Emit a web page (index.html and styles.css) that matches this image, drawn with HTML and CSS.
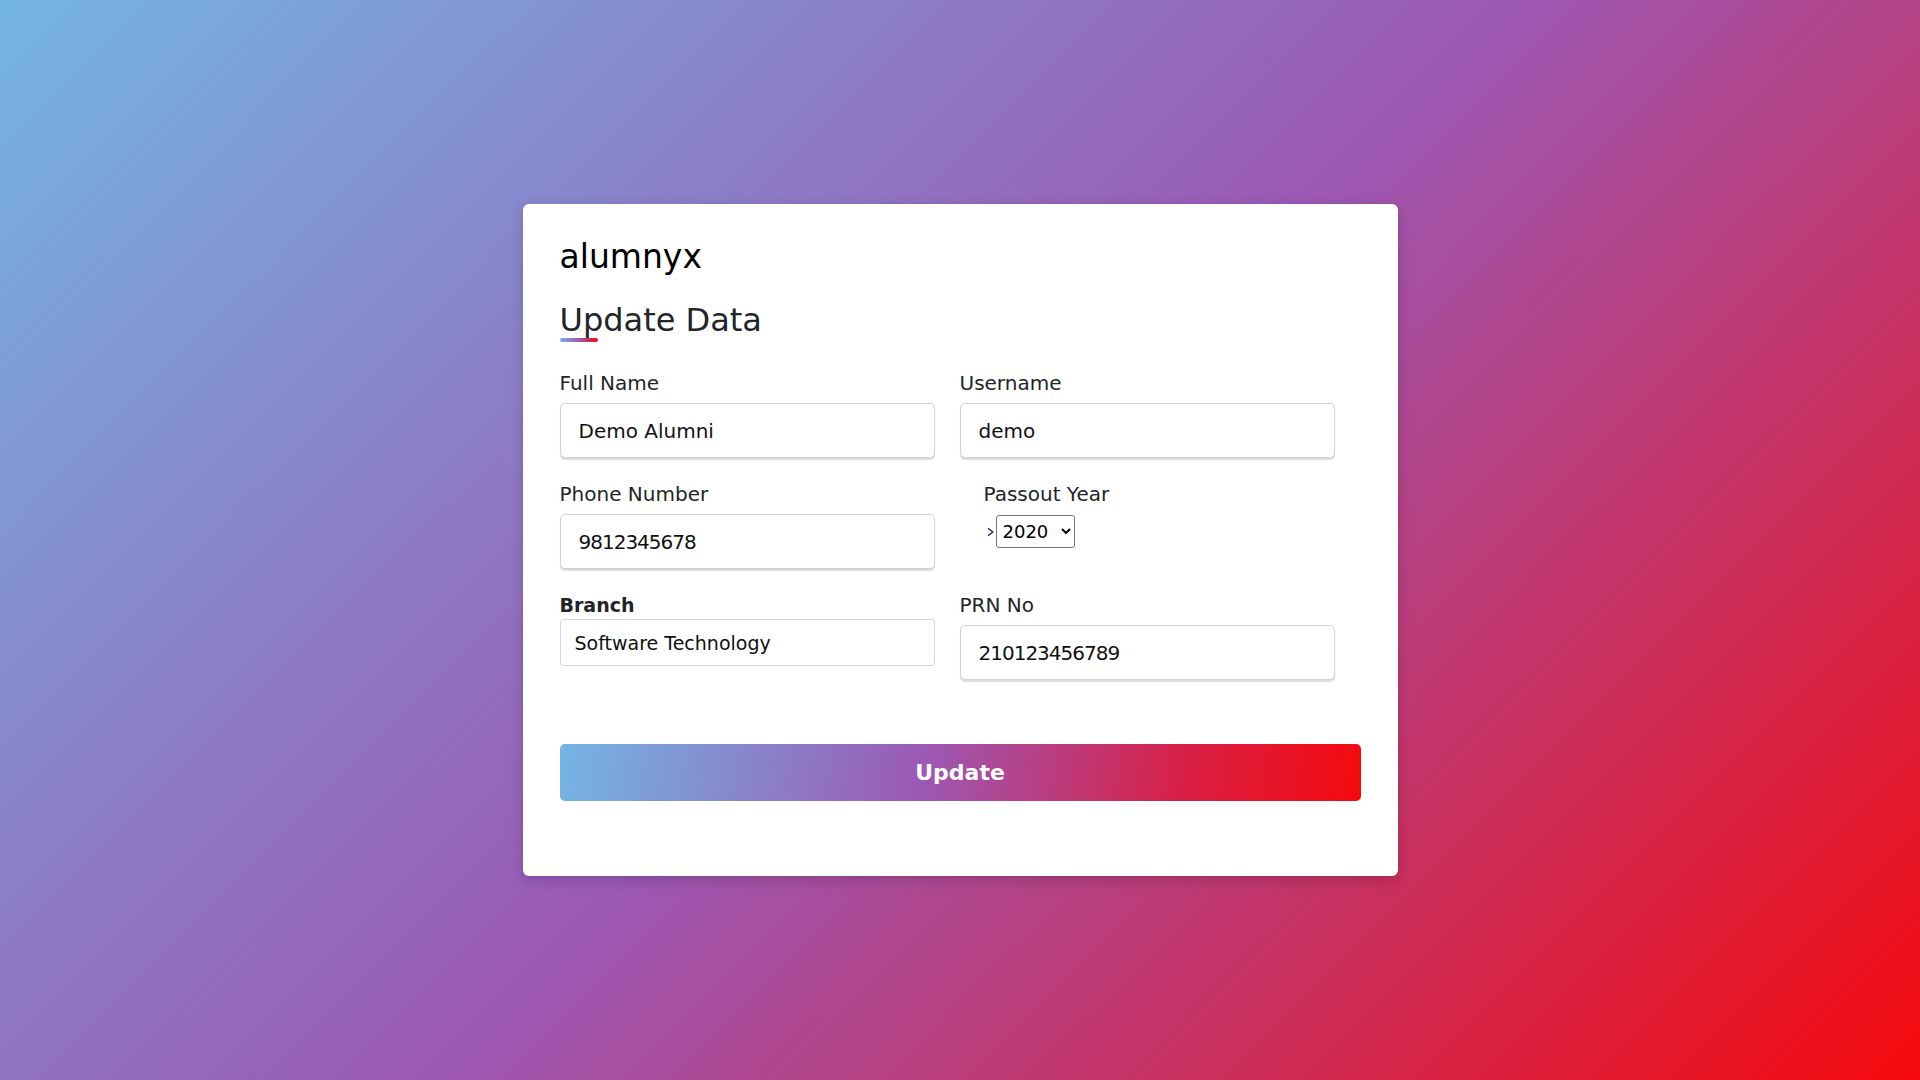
FILE: index.html
```html
<!DOCTYPE html>
<html lang="en">
<head>
<meta charset="utf-8">
<title>alumnyx - Update Data</title>
<link rel="stylesheet" href="styles.css">
</head>
<body>
  <main class="card">
    <div class="brand">alumnyx</div>
    <h2 class="title">Update Data</h2>
    <form class="form">
      <div class="grid">
        <div class="group">
          <label class="label">Full Name</label>
          <input class="input" type="text" value="Demo Alumni">
        </div>
        <div class="group">
          <label class="label">Username</label>
          <input class="input" type="text" value="demo">
        </div>
        <div class="group">
          <label class="label">Phone Number</label>
          <input class="input num" type="text" value="9812345678">
        </div>
        <div class="group group-indent">
          <label class="label">Passout Year</label>
          <div class="select-row">
            <svg class="chev" width="7" height="10" viewBox="0 0 7 10"><polyline points="1,1.2 5.8,5 1,8.8" fill="none" stroke="#1f2a44" stroke-width="1.4"/></svg>
            <select class="select"><option>2020</option></select>
          </div>
        </div>
        <div class="group">
          <label class="label label-bold">Branch</label>
          <input class="input input-plain" type="text" value="Software Technology">
        </div>
        <div class="group">
          <label class="label">PRN No</label>
          <input class="input num" type="text" value="210123456789">
        </div>
      </div>
      <button class="btn" type="button">Update</button>
    </form>
  </main>
</body>
</html>
```

FILE: styles.css
```css
* { box-sizing: border-box; }

html, body {
  margin: 0;
  height: 100%;
}

body {
  font-family: "DejaVu Sans", sans-serif;
  background: linear-gradient(135deg, #74b5e4 0%, #9b59b6 50%, #f5090c 100%);
  display: flex;
  align-items: center;
  justify-content: center;
  min-height: 100vh;
}

.card {
  width: 875px;
  background: #fff;
  border-radius: 6px;
  padding: 33px 37px 37px 37px;
  box-shadow: 0 4px 14px rgba(0, 0, 0, 0.18);
}

.brand {
  font-size: 33px;
  line-height: 40px;
  color: #000;
}

.title {
  position: relative;
  margin: 23.6px 0 31.4px 0;
  font-size: 32px;
  line-height: 40px;
  font-weight: normal;
  color: #212529;
}

.title::after {
  content: "";
  position: absolute;
  left: 0;
  top: 38px;
  width: 38px;
  height: 4px;
  border-radius: 2px;
  background: linear-gradient(to right, #74b5e4, #9b59b6, #f5090c);
}

.form { margin: 0; }

.grid {
  display: grid;
  grid-template-columns: 400px 400px;
  align-items: start;
}

.group {
  display: flex;
  flex-direction: column;
  align-items: flex-start;
  margin-bottom: 24px;
}

.group-indent { padding-left: 24px; }

.label {
  font-size: 20px;
  line-height: 24px;
  color: #212529;
  margin-bottom: 8px;
}

.label-bold {
  font-weight: bold;
  font-size: 19px;
  margin-bottom: 2px;
}

.input {
  width: 375px;
  height: 55px;
  border: 1px solid #d2d2d2;
  border-radius: 5px;
  padding: 0 18px;
  font-family: "DejaVu Sans", sans-serif;
  font-size: 20px;
  color: #111;
  background: #fff;
  box-shadow: 0 1.5px 1px rgba(0, 0, 0, 0.14);
  outline: none;
}

.num { letter-spacing: -1px; }

.input-plain {
  height: 47px;
  padding: 0 14px;
  font-size: 19px;
  border-radius: 3px;
  box-shadow: none;
  border-color: #d6d6d6;
}

.select-row {
  display: flex;
  align-items: center;
  height: 33px;
  margin-top: 1px;
}

.chev {
  margin-left: 3px;
  margin-right: 2px;
  display: block;
}

.select {
  width: 79px;
  height: 33px;
  font-family: "DejaVu Sans", sans-serif;
  font-size: 18px;
  color: #000;
  border: 1px solid #767676;
  border-radius: 3px;
  background: #fff;
  padding: 0 0 0 2px;
}

.btn {
  display: block;
  width: 100%;
  height: 57px;
  margin: 40px 0 38px 0;
  border: none;
  border-radius: 5px;
  background: linear-gradient(100deg, #74b5e4 0%, #9b59b6 45%, #d91f45 78%, #f5090c 100%);
  color: #fff;
  font-family: "DejaVu Sans", sans-serif;
  font-size: 22px;
  font-weight: bold;
  cursor: pointer;
}
```
